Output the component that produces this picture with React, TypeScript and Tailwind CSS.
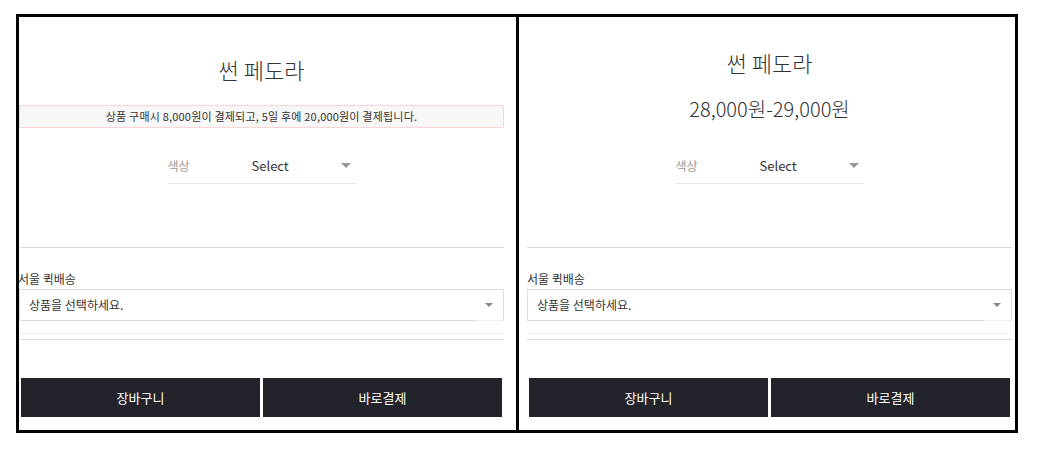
const font = { fontFamily: '"Noto Sans CJK KR", "Noto Sans", sans-serif' };

function OptionRow() {
  return (
    <div className="mx-auto flex h-[36px] w-[188px] items-center border-b border-[#e5e5e5]">
      <span className="w-[84px] text-[12px] text-[#999]">색상</span>
      <span className="flex-1 text-[13px] text-[#333]">Select</span>
      <span className="mr-[5px] h-0 w-0 border-x-[5px] border-t-[5px] border-x-transparent border-t-[#999]" />
    </div>
  );
}

function BottomPart({ labelShift }: { labelShift: string }) {
  return (
    <div className="border-t border-[#dddddd]">
      <div className={`mt-[22px] text-[12px] leading-[18px] text-[#333] ${labelShift}`}>서울 퀵배송</div>
      <div className="relative mt-[1px] flex h-[32px] items-center border border-[#dddddd] pl-[9px] pr-[10px]">
        <span className="flex-1 text-[12px] text-[#333]">상품을 선택하세요.</span>
        <span className="h-0 w-0 border-x-[4px] border-t-[4px] border-x-transparent border-t-[#888]" />
        <span className="absolute bottom-[-1px] right-0 h-[1px] w-[27px] bg-[#f1f1f1]" />
      </div>
      <div className="mt-[12px] h-[1px] bg-[#efefef]" />
      <div className="mt-[5px] h-[1px] bg-[#dddddd]" />
      <div className="mx-[2px] mt-[38px] flex gap-[3px]">
        <button className="h-[39px] w-[239px] bg-[#23242b] text-[13px] text-white">장바구니</button>
        <button className="h-[39px] w-[239px] bg-[#23242b] text-[13px] text-white">바로결제</button>
      </div>
      <div className="h-[13px]" />
    </div>
  );
}

export default function App() {
  return (
    <div className="min-h-[452px] bg-white pl-[16px] pt-[14px]" style={font}>
      <div className="flex w-[1002px] border-[3px] border-black">
        <div className="w-[498px] overflow-hidden pr-[12px]">
          <div className="flex h-[230px] flex-col pt-[37px]">
            <h1 className="text-center text-[22px] font-light leading-[30px] text-[#333]">썬 페도라</h1>
            <div className="mt-[21px] flex h-[23px] items-center justify-center border border-[#fbd5d5] bg-[#f7f7f7] text-[11px] tracking-[0.2px] text-[#333]">
              상품 구매시 8,000원이 결제되고, 5일 후에 20,000원이 결제됩니다.
            </div>
            <div className="mt-[20px]">
              <OptionRow />
            </div>
          </div>
          <BottomPart labelShift="-ml-[1px]" />
        </div>
        <div className="w-[3px] bg-black" />
        <div className="flex-1 pl-[8px] pr-[3px]">
          <div className="flex h-[230px] flex-col pt-[30px]">
            <h1 className="text-center text-[22px] font-light leading-[30px] text-[#333]">썬 페도라</h1>
            <div className="mt-[18px] text-center text-[20px] font-light leading-[28px] text-[#333]">28,000원-29,000원</div>
            <div className="mt-[25px]">
              <OptionRow />
            </div>
          </div>
          <BottomPart labelShift="" />
        </div>
      </div>
    </div>
  );
}
